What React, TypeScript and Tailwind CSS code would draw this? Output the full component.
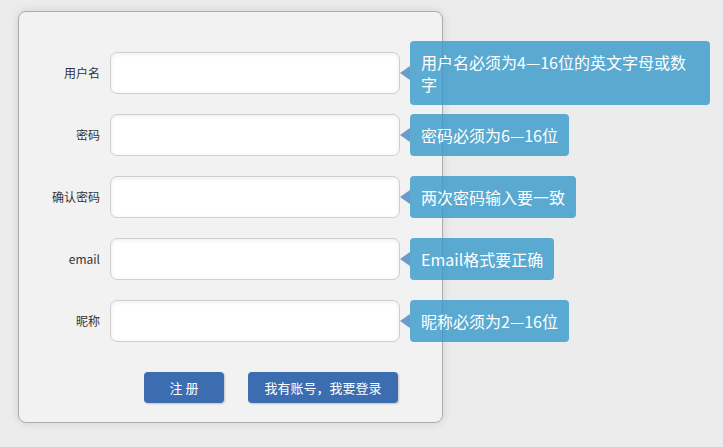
import React from "react";

type Field = { label: string; type: string; tip: string };

const fields: Field[] = [
  { label: "用户名", type: "text", tip: "用户名必须为4—16位的英文字母或数字" },
  { label: "密码", type: "password", tip: "密码必须为6—16位" },
  { label: "确认密码", type: "password", tip: "两次密码输入要一致" },
  { label: "email", type: "text", tip: "Email格式要正确" },
  { label: "昵称", type: "text", tip: "昵称必须为2—16位" },
];

const font = { fontFamily: '"Noto Sans CJK SC", "Noto Sans", sans-serif' };

function Row({ field }: { field: Field }) {
  return (
    <div className="relative flex h-[42px] items-center">
      <label className="w-[81px] pr-0 text-right text-[12px] text-[#333]">{field.label}</label>
      <input
        type={field.type}
        className="ml-[10px] h-[42px] w-[290px] rounded-[7px] border border-[#cfcfcf] bg-white shadow-[inset_0_1px_4px_rgba(0,0,0,0.08)] outline-none"
      />
      {/* validation hint bubble */}
      <div className="absolute left-[391px] top-1/2 z-10 w-max max-w-[300px] -translate-y-1/2 rounded-[4px] bg-[#3498cb]/80 px-[11px] py-[10px] text-[16px] leading-[22px] text-white">
        <span className="absolute left-[-10px] top-1/2 h-0 w-0 -translate-y-1/2 border-y-[7px] border-r-[10px] border-y-transparent border-r-[#6a9bcb]" />
        {field.tip}
      </div>
    </div>
  );
}

export default function App() {
  return (
    <div className="min-h-screen w-full bg-[#ececec] pl-[18px] pt-[11px]" style={font}>
      <div className="h-[412px] w-[425px] rounded-[8px] border border-[#acacac] bg-[#f2f2f2] pt-[40px] shadow-[0_0_10px_rgba(0,0,0,0.12)]">
        <form className="flex flex-col gap-[20px]" onSubmit={(e) => e.preventDefault()}>
          {fields.map((f) => (
            <Row key={f.label} field={f} />
          ))}
          <div className="mt-[10px] flex gap-[24px] pl-[125px]">
            <button
              type="submit"
              className="h-[31px] w-[80px] rounded-[4px] bg-[#3d6db1] text-[13px] text-white shadow-[1px_1px_2px_rgba(0,0,0,0.2)]"
            >
              注 册
            </button>
            <button
              type="button"
              className="h-[31px] w-[150px] rounded-[4px] bg-[#3d6db1] text-[13px] text-white shadow-[1px_1px_2px_rgba(0,0,0,0.2)]"
            >
              我有账号，我要登录
            </button>
          </div>
        </form>
      </div>
    </div>
  );
}
